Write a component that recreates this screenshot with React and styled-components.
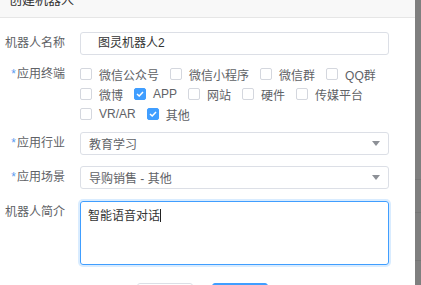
import React from 'react';
import styled, { createGlobalStyle } from 'styled-components';

const GlobalStyle = createGlobalStyle`
  html, body {
    margin: 0;
    padding: 0;
    overflow: hidden;
    background: #7f7f7f;
  }
  body {
    font-family: "Liberation Sans", "Noto Sans CJK SC", sans-serif;
    font-size: 12px;
  }
`;

const Page = styled.div`
  display: flex;
  width: 421px;
  height: 285px;
  overflow: hidden;
`;

const Modal = styled.div`
  width: 415px;
  flex-shrink: 0;
  background: #fff;
  display: flex;
  flex-direction: column;
`;

const Backdrop = styled.div`
  flex: 1;
  display: flex;
  flex-direction: column;
`;

const BackdropRow = styled.div`
  height: ${p => p.h}px;
  flex-shrink: 0;
  border-bottom: 1px solid #767676;
`;

const Header = styled.div`
  margin-top: -20px;
  height: 37px;
  flex-shrink: 0;
  display: flex;
  align-items: center;
  padding-left: 9px;
  background: #f8f8f8;
  border-bottom: 1px solid #e6e6e6;
  font-size: 13px;
  color: #333;
`;

const Form = styled.div`
  padding-top: 14px;
  display: flex;
  flex-direction: column;
`;

const Item = styled.div`
  display: flex;
  align-items: flex-start;
  margin-bottom: ${p => p.mb || 0}px;
`;

const Label = styled.div`
  width: 65px;
  margin-right: 15px;
  flex-shrink: 0;
  text-align: right;
  line-height: ${p => p.lh || 23}px;
  color: #606266;
  white-space: nowrap;
`;

const Star = styled.span`
  color: #5b9cf0;
  margin-right: 1px;
`;

const Input = styled.div`
  width: 309px;
  height: 23px;
  box-sizing: border-box;
  border: 1px solid #dcdfe6;
  border-radius: 3px;
  padding-left: 17px;
  line-height: 21px;
  color: #333;
`;

const Select = styled.div`
  width: 309px;
  height: 23px;
  box-sizing: border-box;
  border: 1px solid #dcdfe6;
  border-radius: 3px;
  padding: 0 8px;
  display: flex;
  align-items: center;
  justify-content: space-between;
  color: #606266;
`;

const Arrow = styled.span`
  width: 0;
  height: 0;
  border-left: 4.5px solid transparent;
  border-right: 4.5px solid transparent;
  border-top: 5px solid #8d9096;
`;

const CheckGroup = styled.div`
  width: 309px;
  display: flex;
  flex-wrap: wrap;
`;

const CheckItem = styled.label`
  display: flex;
  align-items: center;
  height: 20px;
  margin-right: 11px;
  color: #606266;
  white-space: nowrap;
`;

const Box = styled.span`
  width: 12px;
  height: 12px;
  box-sizing: border-box;
  border-radius: 2px;
  margin-right: 7px;
  border: 1px solid ${p => (p.checked ? '#409eff' : '#d4d7de')};
  background: ${p => (p.checked ? '#409eff' : '#fff')};
  display: flex;
  align-items: center;
  justify-content: center;
`;

const TextArea = styled.div`
  width: 309px;
  height: 64px;
  box-sizing: border-box;
  border: 1px solid #409eff;
  border-radius: 3px;
  box-shadow: 0 0 0 2px rgba(64, 158, 255, 0.2);
  padding: 6px 7px;
  line-height: 16px;
  color: #333;
`;

const Caret = styled.span`
  display: inline-block;
  width: 1px;
  height: 13px;
  background: #222;
  vertical-align: -2px;
`;

const Footer = styled.div`
  display: flex;
  justify-content: center;
  gap: 19px;
  margin-left: -10px;
`;

const Button = styled.div`
  width: 56px;
  height: 28px;
  box-sizing: border-box;
  border-radius: 3px;
  border: 1px solid ${p => (p.primary ? '#409eff' : '#dcdfe6')};
  background: ${p => (p.primary ? '#409eff' : '#fff')};
`;

const terminals = [
  { name: '微信公众号' },
  { name: '微信小程序' },
  { name: '微信群' },
  { name: 'QQ群' },
  { name: '微博' },
  { name: 'APP', checked: true },
  { name: '网站' },
  { name: '硬件' },
  { name: '传媒平台' },
  { name: 'VR/AR' },
  { name: '其他', checked: true },
];

function Check({ name, checked }) {
  return (
    <CheckItem>
      <Box checked={checked}>
        {checked && (
          <svg width="8" height="6" viewBox="0 0 8 6">
            <path d="M1 3 L3.2 5 L7 1" fill="none" stroke="#fff" strokeWidth="1.5" />
          </svg>
        )}
      </Box>
      {name}
    </CheckItem>
  );
}

export default function App() {
  return (
    <Page>
      <GlobalStyle />
      <Modal>
        <Header>创建机器人</Header>
        <Form>
          <Item mb={9}>
            <Label>机器人名称</Label>
            <Input>图灵机器人2</Input>
          </Item>
          <Item mb={8}>
            <Label lh={20}><Star>*</Star>应用终端</Label>
            <CheckGroup>
              {terminals.map(t => (
                <Check key={t.name} name={t.name} checked={t.checked} />
              ))}
            </CheckGroup>
          </Item>
          <Item mb={11}>
            <Label><Star>*</Star>应用行业</Label>
            <Select>
              教育学习
              <Arrow />
            </Select>
          </Item>
          <Item mb={12}>
            <Label><Star>*</Star>应用场景</Label>
            <Select>
              导购销售 - 其他
              <Arrow />
            </Select>
          </Item>
          <Item mb={18}>
            <Label>机器人简介</Label>
            <TextArea>
              智能语音对话<Caret />
            </TextArea>
          </Item>
          <Footer>
            <Button />
            <Button primary />
          </Footer>
        </Form>
      </Modal>
      <Backdrop>
        <BackdropRow h={179} />
        <BackdropRow h={32} />
        <BackdropRow h={47} />
      </Backdrop>
    </Page>
  );
}
